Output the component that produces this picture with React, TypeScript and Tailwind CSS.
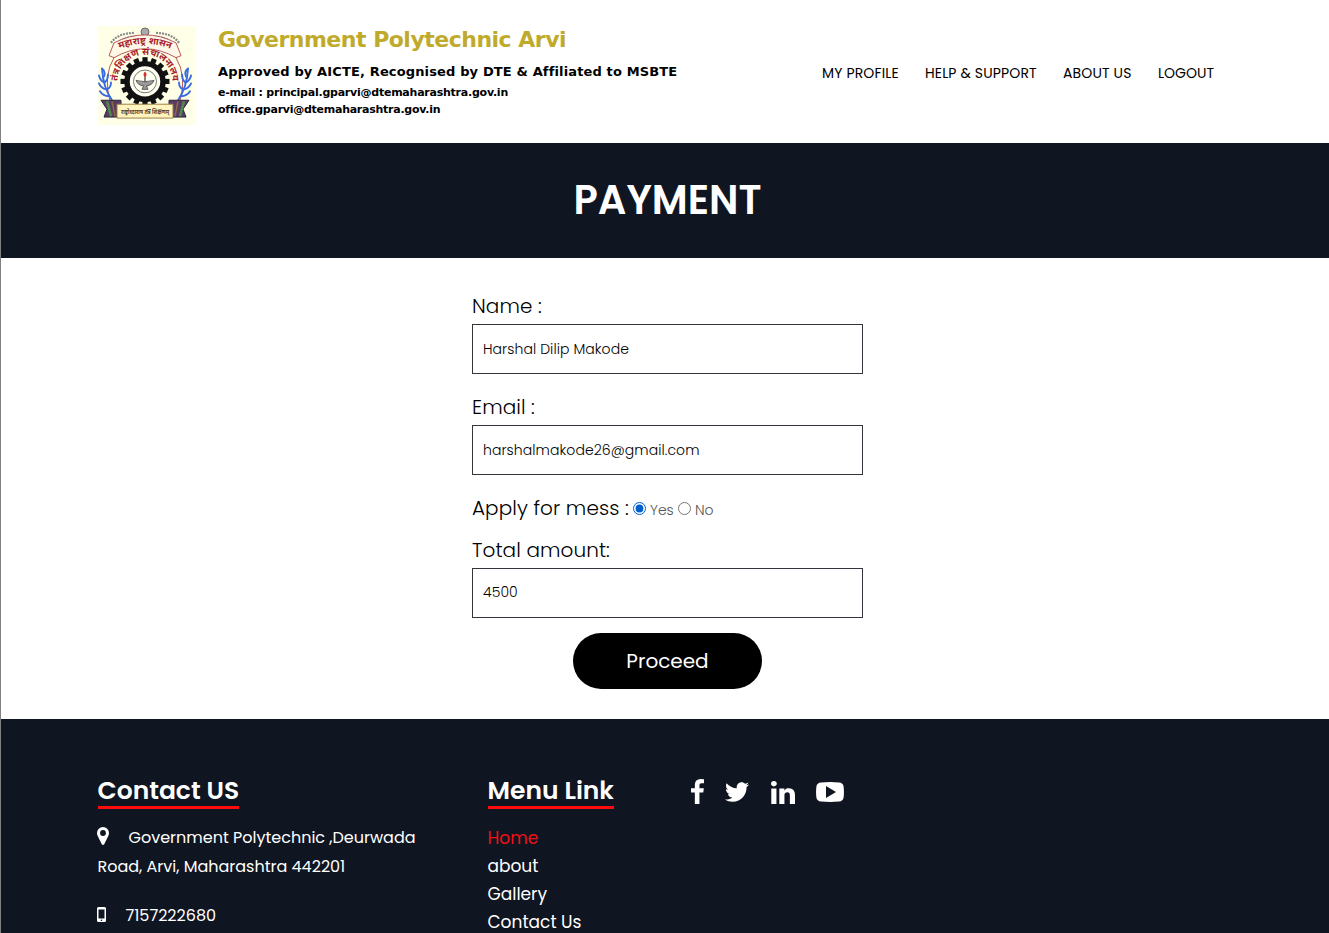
import type { ReactNode } from "react";
import { FaTwitter } from "react-icons/fa";

const field =
  "h-[50px] w-[391px] border border-[#35343c] bg-white px-2.5 text-[14px] font-light tracking-[0.08px] text-black outline-none";
const label = "block h-[30px] text-[20px] font-light leading-[30px] tracking-[0.08px] text-black";

function Crest() {
  const teeth = Array.from({ length: 16 }, (_, i) => i * 22.5);
  return (
    <svg viewBox="1 0 98 100" preserveAspectRatio="none" className="ml-[0.5px] mt-px h-[99px] w-[98px] shrink-0" aria-label="Institute crest">
      <rect width="100" height="100" fill="#ffffe8" />
      <g fill="none" stroke="#8a8a8a" strokeWidth="2.2" strokeDasharray="2 1">
        <path d="M14 17Q21 7 38 7M82 17Q75 7 58 7" />
        <path d="M20 17Q28 10 40 10M76 17Q68 10 56 10" stroke="#aaa" strokeWidth="1.5" />
      </g>
      <circle cx="48" cy="6" r="4" fill="#aaa" stroke="#555" strokeWidth=".8" />
      <path d="M17 17Q48 1 79 17L84 30L79 32Q48 14 17 32L12 30Z" fill="#fff8e8" stroke="#b0444c" strokeWidth=".9" />
      <path d="M17 32Q6 50 13 76M79 32Q90 50 83 76" fill="none" stroke="#b0444c" strokeWidth=".9" />
      <defs>
        <path id="ribbonArc" d="M16 26Q48 10 80 26" />
        <path id="mottoArc" d="M26 73A27.500 27.500 0 1 1 70 73" />
      </defs>
      <g fill="#a81d2b" fontFamily="Noto Sans, sans-serif" fontWeight="700" textAnchor="middle">
        <text fontSize="9.5"><textPath href="#ribbonArc" startOffset="50%">महाराष्ट्र शासन</textPath></text>
        <text fontSize="9.5"><textPath href="#mottoArc" startOffset="50%">तंत्रशिक्षण संचालनालय</textPath></text>
      </g>
      <g fill="#111">
        {teeth.map((a) => (
          <rect key={a} x="45.4" y="31.500" width="5.200" height="7" transform={`rotate(${a} 48 56)`} />
        ))}
      </g>
      <circle cx="48" cy="56" r="18" fill="#fffff2" stroke="#111" strokeWidth="5.500" />
      <circle cx="48" cy="56" r="11.500" fill="none" stroke="#555" strokeWidth=".8" />
      <path d="M39 55Q48 57.500 57 55Q55 60 49.500 60.500L51 64H45L46.500 60.500Q41 60 39 55Z" fill="#999" stroke="#444" strokeWidth=".8" />
      <path d="M48 56V51" stroke="#333" strokeWidth="1.200" />
      <path d="M48 52Q45 49 48 46Q51 49 48 52Z" fill="#d92e2e" />
      <g fill="none" stroke="#3a6be0" strokeWidth="1.900" strokeLinecap="round">
        <path d="M5 43Q6 62 15 75" />
        <path d="M5 43Q9 46 7 51M2 50Q3 55 7 57M11 49Q11 54 8 57M2 58Q4 63 9 64M14 57Q14 62 10 64M3 66Q6 71 12 71" />
        <path d="M91 43Q90 62 81 75" />
        <path d="M91 43Q87 46 89 51M94 50Q93 55 89 57M85 49Q85 54 88 57M94 58Q92 63 87 64M82 57Q82 62 86 64M93 66Q90 71 84 71" />
      </g>
      <path d="M4 75H24V92H7L10 84ZM92 75H72V92H89L86 84Z" fill="#5c3a66" stroke="#272633" strokeWidth="1" />
      <path d="M10 76L14 91M87 76L83 91" stroke="#4c8c48" strokeWidth="2.500" />
      <path d="M15 76L18 91M81 76L78 91" stroke="#8b6a3c" strokeWidth="1.500" />
      <path d="M20 79H76V93H20Z" fill="#fff4bd" stroke="#9b8044" strokeWidth="1" />
      <text x="48" y="88.500" textAnchor="middle" fontSize="6.500" fontWeight="700" fontFamily="Noto Sans, sans-serif" fill="#4d3b35" textLength="48" lengthAdjust="spacingAndGlyphs">राष्ट्रोध्दाराय तंत्र शिक्षणम्</text>
    </svg>
  );
}

function FooterTitle({ children }: { children: ReactNode }) {
  return (
    <h2 className="h-9 w-fit border-b-[3px] border-[#ff0b0b] text-[25px] font-semibold leading-9">
      {children}
    </h2>
  );
}

export default function App() {
  return (
    <div className="flex h-[933px] flex-col overflow-hidden border-l border-[#808080] bg-white font-['Poppins','Inter',sans-serif] text-black">
      <header className="flex h-[143px] shrink-0 pl-[96.500px] pt-[25px]">
        <Crest />
        <div className="ml-[22px] mt-px w-[560px] whitespace-nowrap font-['Verdana','DejaVu_Sans',sans-serif] font-bold">
          <h1 className="h-[34px] text-[22px] leading-7 tracking-[-0.5px] text-[#c0aa2b]">Government Polytechnic Arvi</h1>
          <p className="h-6 text-[13px] leading-6 tracking-[0.14px]">Approved by AICTE, Recognised by DTE &amp; Affiliated to MSBTE</p>
          <p className="h-[17px] text-[11px] leading-[17px] tracking-[-0.239px]">e-mail : principal.gparvi@dtemaharashtra.gov.in</p>
          <p className="h-[17px] text-[11px] leading-[17px] tracking-[-0.260px]">office.gparvi@dtemaharashtra.gov.in</p>
        </div>
        <nav className="ml-11 flex h-6 gap-[26px] whitespace-nowrap pt-9 text-[14px] leading-6 tracking-[0.14px]">
          <a className="w-[77px]">MY PROFILE</a>
          <a className="w-[112px]">HELP &amp; SUPPORT</a>
          <a className="w-[69px]">ABOUT US</a>
          <a className="w-[56px] tracking-normal">LOGOUT</a>
        </nav>
      </header>

      <section className="flex h-[115px] shrink-0 items-center justify-center bg-[#0f1521] pb-0.5 pl-[5px]">
        <h2 className="text-[40px] font-semibold leading-none text-white">PAYMENT</h2>
      </section>

      <main className="h-[461px] shrink-0 pl-[471px] pt-[33px]">
        <form className="flex w-[391px] flex-col">
          <label className={`${label} mb-[3px]`}>Name :</label>
          <input className={field} defaultValue="Harshal Dilip Makode" />
          <label className={`${label} mb-[3px] mt-[18px]`}>Email :</label>
          <input className={field} defaultValue="harshalmakode26@gmail.com" />
          <div className="mt-[18px] flex h-[30px] items-center whitespace-nowrap text-[14px] font-light text-[#555]">
            <span className={`${label} w-[161px]`}>Apply for mess :</span>
            <input type="radio" name="mess" defaultChecked className="m-0 h-[13px] w-[13px] accent-[#005fcc]" />
            <span className="ml-1 mt-1 w-7">Yes</span>
            <input type="radio" name="mess" className="m-0 h-[13px] w-[13px]" />
            <span className="ml-1 mt-1">No</span>
          </div>
          <label className={`${label} mb-[3px] mt-3`}>Total amount:</label>
          <input className={`${field} pb-0.5`} defaultValue="4500" />
          <button type="button" className="mt-[15px] h-14 w-[189px] self-center rounded-full bg-black text-[20px] text-white">Proceed</button>
        </form>
      </main>

      <footer className="flex h-[214px] shrink-0 bg-[#0f1521] pl-[96.500px] pt-[54px] text-white">
        <section className="w-[390px] shrink-0 whitespace-nowrap text-[16px] leading-[29px]">
          <FooterTitle>Contact US</FooterTitle>
          <div className="mt-[14px] flex h-[29px] items-center">
            <svg viewBox="0 0 12 18" className="-ml-[0.5px] mb-1 h-[18px] w-3">
              <path fill="white" fillRule="evenodd" d="M6 0a6 6 0 0 1 6 6c0 1.100-.2 1.900-.6 2.700L7.200 17.200Q6 18.800 4.800 17.200L.6 8.700C.2 7.900 0 7.100 0 6a6 6 0 0 1 6-6ZM6 3.100a2.900 2.900 0 1 0 0 5.800a2.900 2.900 0 1 0 0-5.800Z" />
            </svg>
            <span className="ml-[19.500px]">Government Polytechnic ,Deurwada</span>
          </div>
          <p>Road, Arvi, Maharashtra 442201</p>
          <div className="mt-5 flex h-[29px] items-center">
            <svg viewBox="0 0 9 15" className="-ml-[0.5px] mb-[3px] h-[15px] w-[9px]">
              <path fill="white" fillRule="evenodd" d="M1.500 0h6Q9 0 9 1.500v12Q9 15 7.500 15h-6Q0 15 0 13.500v-12Q0 0 1.500 0ZM1.500 2.500v9h6v-9ZM4.500 12.400a.8.8 0 1 0 0 1.600a.8.8 0 1 0 0-1.600Z" />
            </svg>
            <span className="ml-[19.500px]">7157222680</span>
          </div>
        </section>
        <section className="w-[203px] shrink-0 whitespace-nowrap text-[17px] leading-7">
          <FooterTitle>Menu Link</FooterTitle>
          <ul className="mt-[15px]">
            <li className="text-[#f01018]">Home</li>
            <li>about</li>
            <li>Gallery</li>
            <li>Contact Us</li>
          </ul>
        </section>
        <div className="flex h-[38px] items-center">
          <svg viewBox="95 0 864 1664" className="mb-px h-[25px] w-[13px]" fill="currentColor">
            <path d="M959 12v264H802q-86 0-116 36t-30 108v189h293l-39 296H656v759H350V905H95V609h255V391q0-186 104-288.500T731 0q147 0 228 12z" />
          </svg>
          <FaTwitter className="ml-[21.500px] h-6 w-6" />
          <svg viewBox="0 68 1536 1468" className="ml-[22px] h-[23px] w-6" fill="currentColor">
            <path d="M349 545v991H19V545h330zm21-306q1 73-50.500 122T184 410h-2q-82 0-132-49T0 239q0-74 51.500-122.500T186 68t133 48.500T370 239zm1166 729v568h-329v-530q0-105-40.500-164.500T1040 782q-63 0-105.500 34.500T871 902q-11 30-11 81v553H531q2-399 2-647t-1-296l-1-48h329v144h-2q20-32 41-56t56.500-52T1046 537.500t114-15.500q171 0 275 113.500T1536 968z" />
          </svg>
          <svg viewBox="0 0 28 20" className="ml-[20.500px] h-5 w-7" fill="currentColor">
            <path fillRule="evenodd" d="M5 .5Q14-.4 23 .5Q27 .8 27.600 4.500Q28.300 10 27.600 15.500Q27 19.200 23 19.500Q14 20.400 5 19.500Q1 19.200.4 15.500Q-.3 10 .4 4.500Q1 .8 5 .5ZM10 4v12l10-6Z" />
          </svg>
        </div>
      </footer>
    </div>
  );
}
